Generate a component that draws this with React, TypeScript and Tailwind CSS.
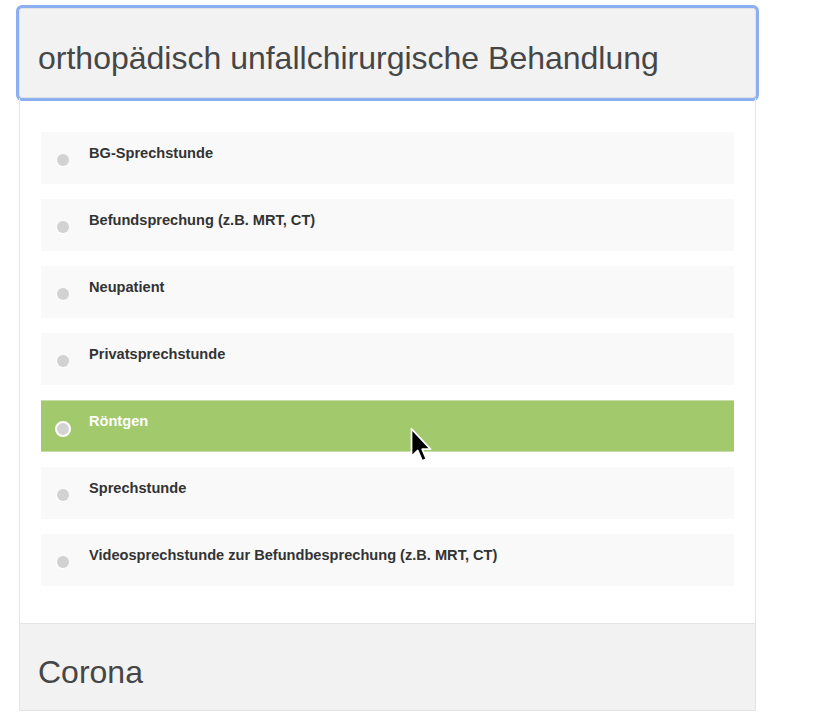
const OPTIONS = [
  "BG-Sprechstunde",
  "Befundsprechung (z.B. MRT, CT)",
  "Neupatient",
  "Privatsprechstunde",
  "Röntgen",
  "Sprechstunde",
  "Videosprechstunde zur Befundbesprechung (z.B. MRT, CT)",
];

const SELECTED = "Röntgen";

function Radio({ active }: { active: boolean }) {
  return (
    <span className="mt-5 ml-3.5 flex h-4 w-4 shrink-0 items-center justify-center">
      {active ? (
        <span className="h-4 w-4 rounded-full border-2 border-white bg-[#d3d3d3]" />
      ) : (
        <span className="h-3 w-3 rounded-full bg-[#d2d2d2] shadow-[-1px_1px_0_#ffffff]" />
      )}
    </span>
  );
}

function Cursor() {
  return (
    <svg
      className="pointer-events-none absolute left-[409px] top-[427px]"
      width="24"
      height="36"
      viewBox="0 0 12 19"
    >
      <path
        d="M1 1 L1 15.5 L4.3 12.4 L6.6 17.8 L8.8 16.9 L6.6 11.7 L11 11.7 Z"
        fill="#000"
        stroke="#fff"
        strokeWidth="0.9"
        strokeLinejoin="round"
      />
    </svg>
  );
}

export default function App() {
  return (
    <div className="relative min-h-[727px] w-[828px] bg-white font-['Liberation_Sans',Arial,sans-serif]">
      <div className="ml-[19px] w-[737px] pt-2">
        {/* open section header */}
        <div className="h-[90px] rounded-[3px] border border-[#e4e4e4] bg-[#f2f2f2] pl-[18px] pt-[31px] ring-[3px] ring-[#8caff2]">
          <h2 className="text-[32px] leading-9 text-[#464646]">
            orthopädisch unfallchirurgische Behandlung
          </h2>
        </div>

        {/* options */}
        <div className="flex flex-col gap-[15px] border-x border-[#e6e6e6] px-[21px] pt-[34px] pb-[37px]">
          {OPTIONS.map((label) => {
            const active = label === SELECTED;
            return (
              <div
                key={label}
                className={
                  active
                    ? "flex h-[52px] items-start border-y border-[#c7dcab] bg-[#a2c96b]"
                    : "flex h-[52px] items-start bg-[#f9f9f9]"
                }
              >
                <Radio active={active} />
                <span
                  className={
                    active
                      ? "mt-[10px] ml-[18px] text-[14.6px] leading-5 font-bold text-white"
                      : "mt-[11px] ml-[18px] text-[14.6px] leading-5 font-bold text-[#333333]"
                  }
                >
                  {label}
                </span>
              </div>
            );
          })}
        </div>

        {/* closed section */}
        <div className="h-[88px] border border-[#e4e4e4] bg-[#f2f2f2] pl-[18px] pt-[30px]">
          <h2 className="text-[32px] leading-9 text-[#464646]">Corona</h2>
        </div>
      </div>

      <Cursor />
    </div>
  );
}
